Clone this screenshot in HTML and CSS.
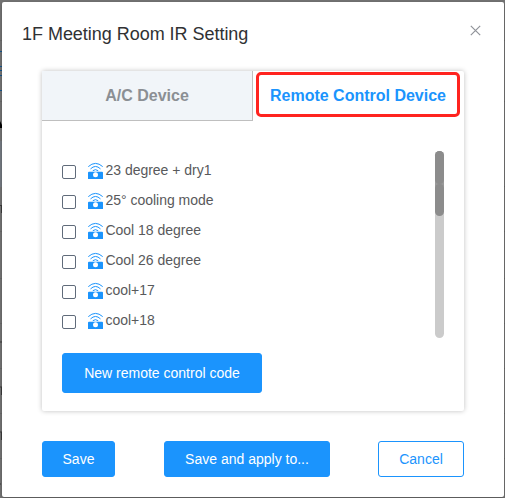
FILE: index.html
```html
<!DOCTYPE html>
<html lang="en">
<head>
<meta charset="utf-8">
<title>1F Meeting Room IR Setting</title>
<link rel="stylesheet" href="styles.css">
</head>
<body>
<svg class="backdrop" width="505" height="498" viewBox="0 0 505 498" aria-hidden="true">
  <path d="M0 40.500h505M0 101.500h505M0 186.500h505M0 231.500h505M0 278.500h505M0 323.500h505M0 368.500h505M0 413.500h505M0 458.500h505" stroke="#686868"/>
  <path d="M0 51.500h2M0 66.500h2M0 70.500h2M0 75.500h2M0 90.500h2" stroke="#14568d"/>
  <path d="M0 141h2v46H0z" fill="#747980"/>
  <path d="M0 121l2 4v3H0z" fill="#000"/>
  <path d="M0 205.500h2M1.500 205v8M0 342h2M0 387h2M1.500 387v8M0 432h2M1.500 432v8M0 484h1" stroke="#3c3c3c"/>
</svg>
<main class="dialog">
  <header class="head">
    <h1 class="title">1F Meeting Room IR Setting</h1>
    <svg class="close" width="11" height="11" viewBox="0 0 11 11"><path d="M.8.8l9.400 9.400M10.200.8L.8 10.200"/></svg>
  </header>
  <section class="panel">
    <nav class="tabs">
      <div class="tab">A/C Device</div>
      <div class="tab active"><span>Remote Control Device</span></div>
    </nav>
    <div class="content">
      <ul class="list">
        <li class="item"><i class="box"></i><svg class="icon" viewBox="0 0 15 17"><use href="#remote"/></svg><span>23 degree + dry1</span></li>
        <li class="item"><i class="box"></i><svg class="icon" viewBox="0 0 15 17"><use href="#remote"/></svg><span>25° cooling mode</span></li>
        <li class="item"><i class="box"></i><svg class="icon" viewBox="0 0 15 17"><use href="#remote"/></svg><span>Cool 18 degree</span></li>
        <li class="item"><i class="box"></i><svg class="icon" viewBox="0 0 15 17"><use href="#remote"/></svg><span>Cool 26 degree</span></li>
        <li class="item"><i class="box"></i><svg class="icon" viewBox="0 0 15 17"><use href="#remote"/></svg><span>cool+17</span></li>
        <li class="item"><i class="box"></i><svg class="icon" viewBox="0 0 15 17"><use href="#remote"/></svg><span>cool+18</span></li>
      </ul>
      <div class="track"><div class="thumb"></div><div class="thumb"></div></div>
    </div>
    <button class="btn create">New remote control code</button>
  </section>
  <footer class="foot">
    <button class="btn save">Save</button>
    <button class="btn apply">Save and apply to...</button>
    <button class="btn cancel">Cancel</button>
  </footer>
</main>
<svg class="defs" width="0" height="0">
  <symbol id="remote" viewBox="0 0 15 17">
    <path d="M.3 4.600Q7.500-1.800 14.700 4.600M2.500 6.900Q7.500 2 12.500 6.900M4.800 8.700Q7.500 6.600 10.200 8.700" fill="none" stroke="#1b94fd" stroke-width="1"/>
    <path d="M1 9.800h13a1 1 0 0 1 1 1V17H0v-6.200a1 1 0 0 1 1-1z" fill="#1b94fd"/>
    <circle cx="7.500" cy="12.800" r="2.500" fill="#fff"/>
  </symbol>
</svg>
</body>
</html>
```

FILE: styles.css
```css
* { box-sizing: border-box; }
body {
  margin: 0;
  width: 505px;
  height: 498px;
  padding: 2px 1px 1px 2px;
  overflow: hidden;
  background: #737373;
  font-family: "Liberation Sans", Arial, sans-serif;
}
.backdrop { position: absolute; top: 0; left: 0; z-index: -1; }
.defs { position: absolute; }
.dialog {
  width: 502px;
  height: 495px;
  border-radius: 2px;
  background: #fff;
  box-shadow: 0 1px 3px rgba(0, 0, 0, .3);
}
.head {
  display: flex;
  justify-content: space-between;
  height: 69px;
  padding: 21px 23px 0 20px;
}
.title {
  margin: 0;
  font-size: 18px;
  font-weight: 400;
  line-height: 22px;
  letter-spacing: -.03px;
  color: #303133;
  white-space: nowrap;
}
.close { margin-top: 2px; fill: none; stroke: #909399; stroke-width: 1.2; }
.panel {
  width: 422px;
  height: 340px;
  margin-left: 40px;
  border-radius: 2px;
  background: #fff;
  box-shadow: 0 0 5px rgba(0, 0, 0, .25);
}
.tabs { display: flex; height: 50px; }
.tab {
  width: 211px;
  height: 50px;
  border-right: 1px solid #bfbfbf;
  border-bottom: 1px solid #bfbfbf;
  background: #f1f5f9;
  color: #8b8f94;
  font-size: 16px;
  font-weight: 700;
  line-height: 50px;
  text-align: center;
  white-space: nowrap;
}
.active {
  padding: 1px 0 0 3px;
  border: 0;
  background: none;
  color: #1b94fd;
}
.active span {
  display: block;
  width: 204px;
  height: 45px;
  border: 3px solid #ff231f;
  border-radius: 5px;
  line-height: 42px;
}
.content {
  display: flex;
  justify-content: space-between;
  height: 232px;
  padding: 30px 20px 0;
}
.list { margin: 5px 0 0; padding: 0; list-style: none; }
.item {
  display: flex;
  height: 30px;
  font-size: 14px;
  line-height: 28px;
  letter-spacing: -.02px;
  color: #58595b;
  white-space: nowrap;
}
.box {
  width: 14px;
  height: 14px;
  margin: 9px 12px 0 0;
  border: 1px solid #606b7a;
  border-radius: 2px;
}
.icon { width: 15px; height: 17px; margin: 6px 2.5px 0 0; }
.track {
  width: 9px;
  height: 187px;
  border-radius: 5px;
  background: linear-gradient(#999 60px, #cbcbcb 60px);
}
.thumb { height: 33px; border-radius: 5px; background: #8c8c8c; }
.thumb + .thumb { height: 32px; }
.btn {
  padding: 0;
  border: 1px solid #1b94fd;
  border-radius: 3px;
  background: #1b94fd;
  color: #fff;
  font: 14px "Liberation Sans", Arial, sans-serif;
  white-space: nowrap;
}
.create { width: 200px; height: 40px; margin-left: 20px; }
.foot {
  display: flex;
  justify-content: space-between;
  padding: 30px 40px 0;
}
.foot .btn { height: 36px; }
.save { width: 73px; }
.apply { width: 166px; margin-left: 1px; }
.foot .cancel { width: 86px; background: #fff; color: #1b94fd; }
```
